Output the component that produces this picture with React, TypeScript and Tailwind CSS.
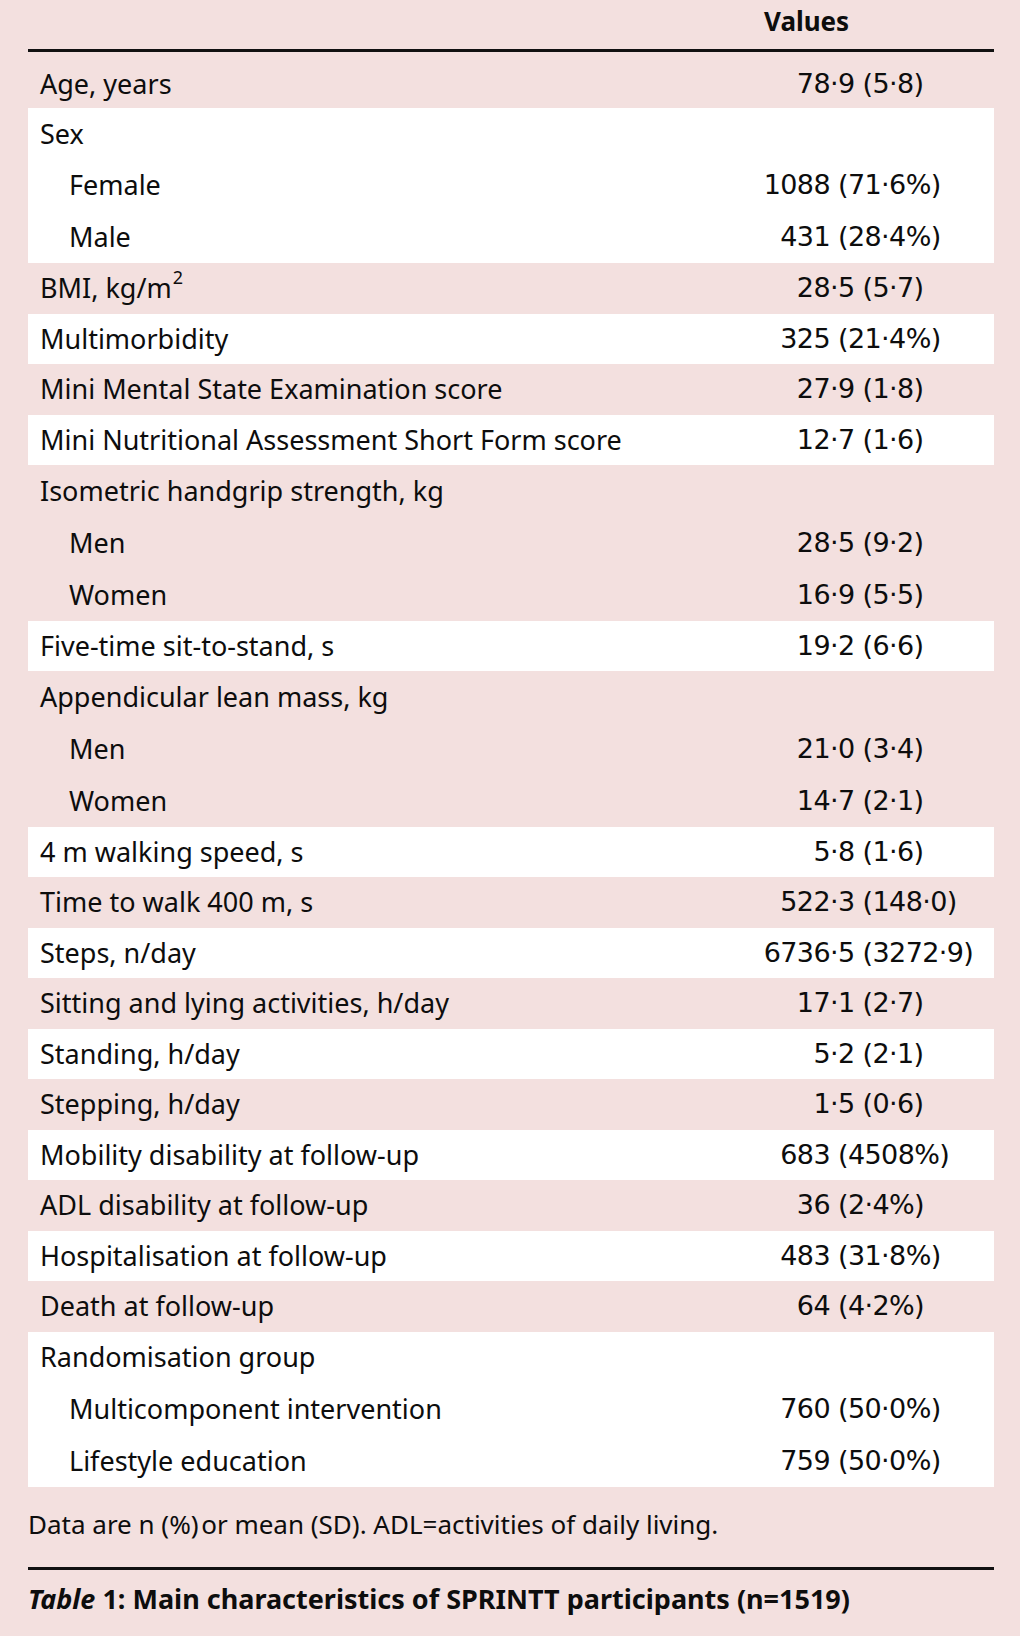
import React from "react";

type Row =
  | { kind: "single"; label: React.ReactNode; value: string; white: boolean; first?: boolean }
  | { kind: "group"; label: string; items: [string, string][]; white: boolean };

const rows: Row[] = [
  { kind: "single", label: "Age, years", value: "78·9 (5·8)", white: false, first: true },
  { kind: "group", label: "Sex", items: [["Female", "1088 (71·6%)"], ["Male", "431 (28·4%)"]], white: true },
  {
    kind: "single",
    label: (
      <>
        BMI, kg/m<sup className="text-[18px] -top-[0.78em] ml-[1px]">2</sup>
      </>
    ),
    value: "28·5 (5·7)",
    white: false,
  },
  { kind: "single", label: "Multimorbidity", value: "325 (21·4%)", white: true },
  { kind: "single", label: "Mini Mental State Examination score", value: "27·9 (1·8)", white: false },
  { kind: "single", label: "Mini Nutritional Assessment Short Form score", value: "12·7 (1·6)", white: true },
  { kind: "group", label: "Isometric handgrip strength, kg", items: [["Men", "28·5 (9·2)"], ["Women", "16·9 (5·5)"]], white: false },
  { kind: "single", label: "Five-time sit-to-stand, s", value: "19·2 (6·6)", white: true },
  { kind: "group", label: "Appendicular lean mass, kg", items: [["Men", "21·0 (3·4)"], ["Women", "14·7 (2·1)"]], white: false },
  { kind: "single", label: "4 m walking speed, s", value: "5·8 (1·6)", white: true },
  { kind: "single", label: "Time to walk 400 m, s", value: "522·3 (148·0)", white: false },
  { kind: "single", label: "Steps, n/day", value: "6736·5 (3272·9)", white: true },
  { kind: "single", label: "Sitting and lying activities, h/day", value: "17·1 (2·7)", white: false },
  { kind: "single", label: "Standing, h/day", value: "5·2 (2·1)", white: true },
  { kind: "single", label: "Stepping, h/day", value: "1·5 (0·6)", white: false },
  { kind: "single", label: "Mobility disability at follow-up", value: "683 (4508%)", white: true },
  { kind: "single", label: "ADL disability at follow-up", value: "36 (2·4%)", white: false },
  { kind: "single", label: "Hospitalisation at follow-up", value: "483 (31·8%)", white: true },
  { kind: "single", label: "Death at follow-up", value: "64 (4·2%)", white: false },
  {
    kind: "group",
    label: "Randomisation group",
    items: [["Multicomponent intervention", "760 (50·0%)"], ["Lifestyle education", "759 (50·0%)"]],
    white: true,
  },
];

function Value({ v }: { v: string }) {
  const m = v.match(/^(\d+)(.*)$/);
  const int = m ? m[1] : v;
  const rest = m ? m[2] : "";
  return (
    <div className="w-[294px] flex whitespace-pre font-['DejaVu_Sans',sans-serif] text-[27px] tracking-[-0.6px]">
      <span className="w-[130px] text-right">{int}</span>
      <span>{rest}</span>
    </div>
  );
}

export default function App() {
  return (
    <div className="w-[1020px] h-[1636px] bg-[#f3e0df] pl-[28px] pr-[26px] text-[#0d0d0d] font-['Noto_Sans',sans-serif] text-[27px]">
      <div className="h-[49px] flex items-end">
        <div className="flex-1" />
        <div className="w-[294px] pl-[64px] pb-[10px] font-bold text-[26px] leading-[36px]">Values</div>
      </div>
      <div className="h-[3px] bg-[#111]" />
      {rows.map((r, i) => {
        const bg = r.white ? "bg-white" : "";
        if (r.kind === "single") {
          return (
            <div
              key={i}
              className={`flex items-center ${bg} ${r.first ? "h-[56px] pt-[9px]" : "h-[50.5px]"}`}
            >
              <div className="flex-1 pl-[12px] whitespace-nowrap">{r.label}</div>
              <Value v={r.value} />
            </div>
          );
        }
        return (
          <div key={i} className={`${bg} flex flex-col`}>
            <div className="h-[51.8px] flex items-center">
              <div className="flex-1 pl-[12px]">{r.label}</div>
            </div>
            {r.items.map(([l, v], j) => (
              <div key={j} className="h-[51.8px] flex items-center">
                <div className="flex-1 pl-[41px] whitespace-nowrap">{l}</div>
                <Value v={v} />
              </div>
            ))}
          </div>
        );
      })}
      <div className="pt-[19px] text-[26px] leading-[36px]">
        Data are n (%)&#8202;or mean (SD). ADL=activities of daily living.
      </div>
      <div className="h-[3px] bg-[#111] mt-[25px]" />
      <div className="pt-[9px] text-[27px] leading-[40px] font-bold">
        <span className="italic">Table</span> 1: Main characteristics of SPRINTT participants (n=1519)
      </div>
    </div>
  );
}
